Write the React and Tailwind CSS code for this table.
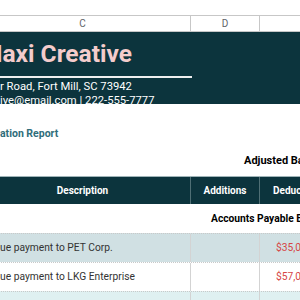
import React from 'react';

// sheet columns: C is scrolled partly out of view on the left
const cols = 'grid grid-cols-[216px_69px_120px] ml-[-25px] w-[405px]';

const rows = [
  { label: 'ue payment to PET Corp.', amount: '$35,000.00', bg: 'bg-[#d0e0e3]' },
  { label: 'ue payment to LKG Enterprise', amount: '$57,000.00', bg: 'bg-white' },
  { label: '', amount: '', bg: 'bg-[#dff0f1]' },
];

export default function App() {
  return (
    <div className="w-[300px] h-[300px] overflow-hidden bg-white font-['Roboto',sans-serif] text-[#333]">
      <div className="h-[15px] bg-white" />

      {/* column letters */}
      <div className={`${cols} h-[17px] border-y border-[#c7c7c7] text-[10px] text-[#5f6368]`}>
        <div className="flex items-center justify-center border-r border-[#c7c7c7]">C</div>
        <div className="flex items-center justify-center border-r border-[#c7c7c7]">D</div>
        <div className="flex items-center justify-center border-r border-[#c7c7c7]">E</div>
      </div>

      {/* company banner */}
      <div className="h-[72px] bg-[#0c343d] text-white">
        <div className="ml-[-19px] pt-[8px] text-[24.5px] leading-[28px] font-bold text-[#f4cccc] whitespace-nowrap">
          Maxi Creative
        </div>
        <div className="mt-[8px] h-[2px] w-[192px] bg-[#eeeeee]" />
        <div className="mt-[2px] text-[11.25px] leading-[14px] whitespace-nowrap">r Road, Fort Mill, SC 73942</div>
        <div className="text-[11.25px] leading-[14px] whitespace-nowrap">ive@email.com | 222-555-7777</div>
      </div>

      {/* report title */}
      <div className="h-[72px] bg-white relative">
        <div className="pt-[23px] text-[10.5px] leading-[14px] font-bold text-[#2f6d7a] whitespace-nowrap">
          ation Report
        </div>
        <div className="mt-[13px] pl-[244px] text-[11px] leading-[14px] font-bold text-black whitespace-nowrap">
          Adjusted Balance
        </div>
      </div>

      {/* table head */}
      <div className={`${cols} h-[28px] bg-[#0c343d] border-t border-[#9fb4b8] text-white text-[10px] font-bold`}>
        <div className="flex items-center justify-center border-r border-[#4f6f75]">Description</div>
        <div className="flex items-center justify-center border-r border-[#4f6f75]">Additions</div>
        <div className="flex items-center pl-[13px] whitespace-nowrap">Deductions</div>
      </div>

      <div className="h-[29px] flex items-center pl-[211px] text-[10.25px] font-bold text-black whitespace-nowrap">
        Accounts Payable Balance
      </div>

      {rows.map((r, i) => (
        <div key={i} className={`${cols} h-[29px] ${r.bg} border-t border-dotted border-[#c9c9c9] text-[10.25px]`}>
          <div className="flex items-center pl-[25px] border-r border-[#d3d3d3] whitespace-nowrap">{r.label}</div>
          <div className="border-r border-[#d3d3d3]" />
          <div className="flex items-center pl-[16px] text-[#d64545] whitespace-nowrap">{r.amount}</div>
        </div>
      ))}
    </div>
  );
}
